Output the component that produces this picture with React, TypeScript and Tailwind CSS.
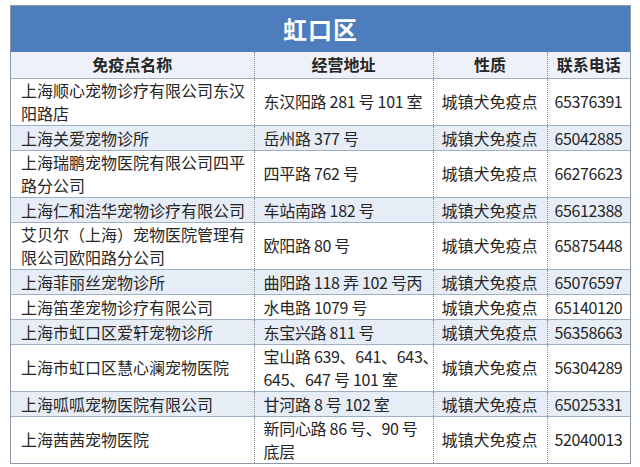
const rows = [
  { name: ["上海顺心宠物诊疗有限公司东汉", "阳路店"], addr: ["东汉阳路 281 号 101 室"], tel: "65376391" },
  { name: ["上海关爱宠物诊所"], addr: ["岳州路 377 号"], tel: "65042885" },
  { name: ["上海瑞鹏宠物医院有限公司四平", "路分公司"], addr: ["四平路 762 号"], tel: "66276623" },
  { name: ["上海仁和浩华宠物诊疗有限公司"], addr: ["车站南路 182 号"], tel: "65612388" },
  { name: ["艾贝尔（上海）宠物医院管理有", "限公司欧阳路分公司"], addr: ["欧阳路 80 号"], tel: "65875448" },
  { name: ["上海菲丽丝宠物诊所"], addr: ["曲阳路 118 弄 102 号丙"], tel: "65076597" },
  { name: ["上海笛垄宠物诊疗有限公司"], addr: ["水电路 1079 号"], tel: "65140120" },
  { name: ["上海市虹口区爱轩宠物诊所"], addr: ["东宝兴路 811 号"], tel: "56358663" },
  { name: ["上海市虹口区慧心澜宠物医院"], addr: ["宝山路 639、641、643、", "645、647 号 101 室"], tel: "56304289" },
  { name: ["上海呱呱宠物医院有限公司"], addr: ["甘河路 8 号 102 室"], tel: "65025331" },
  { name: ["上海茜茜宠物医院"], addr: ["新同心路 86 号、90 号", "底层"], tel: "52040013" },
];

const Lines = ({ lines }: { lines: string[] }) => (
  <>
    {lines.map((l, i) => (
      <div key={i} className="whitespace-nowrap">{l}</div>
    ))}
  </>
);

export default function App() {
  return (
    <div
      className="w-[640px] h-[467px] bg-white pt-[5px] pl-[10px] text-[#262626]"
      style={{ fontFamily: '"Noto Sans CJK SC", "Noto Sans", sans-serif' }}
    >
      <div className="w-[621px] border border-[#8f9aa8]">
        {/* title bar */}
        <div className="h-[46px] bg-[#4d7dbd] flex items-center justify-center text-white text-[24px] font-bold tracking-[1px]">
          虹口区
        </div>

        <table className="w-full border-collapse table-fixed text-[16px] leading-[23px]">
          <colgroup>
            <col className="w-[243px]" />
            <col className="w-[179px]" />
            <col className="w-[114px]" />
            <col />
          </colgroup>
          <thead>
            <tr className="bg-[#eef2f8] h-[26px] font-bold">
              <th className="p-0 text-center border-b border-b-[#9fb0c6] border-r border-r-[#8a8a8a] [border-right-style:dotted]">
                免疫点名称
              </th>
              <th className="p-0 text-center border-b border-b-[#9fb0c6] border-r border-r-[#8a8a8a] [border-right-style:dotted]">
                经营地址
              </th>
              <th className="p-0 text-center border-b border-b-[#9fb0c6] border-r border-r-[#8a8a8a] [border-right-style:dotted]">
                性质
              </th>
              <th className="p-0 text-center border-b border-b-[#9fb0c6]">联系电话</th>
            </tr>
          </thead>
          <tbody>
            {rows.map((r, i) => {
              const last = i === rows.length - 1;
              const single = r.name.length === 1 && r.addr.length === 1;
              const bg = i % 2 === 1 ? "bg-[#e6edf7]" : "bg-white";
              const tb = last ? "" : "border-b border-b-[#9fb0c6]";
              const pad = single ? "pt-px pb-0" : "py-0";
              return (
                <tr key={i} className={bg}>
                  <td className={`pl-[10px] pr-0 ${pad} align-middle ${tb} border-r border-r-[#8a8a8a] [border-right-style:dotted]`}>
                    <Lines lines={r.name} />
                  </td>
                  <td className={`pl-[9px] pr-0 ${pad} align-middle ${tb} border-r border-r-[#8a8a8a] [border-right-style:dotted] tracking-[-0.3px]`}>
                    <Lines lines={r.addr} />
                  </td>
                  <td className={`pl-[8px] pr-0 ${pad} align-middle ${tb} border-r border-r-[#8a8a8a] [border-right-style:dotted]`}>
                    城镇犬免疫点
                  </td>
                  <td className={`pl-[7px] pr-0 ${pad} align-middle ${tb} tracking-[-0.4px]`}>{r.tel}</td>
                </tr>
              );
            })}
          </tbody>
        </table>
      </div>
    </div>
  );
}
